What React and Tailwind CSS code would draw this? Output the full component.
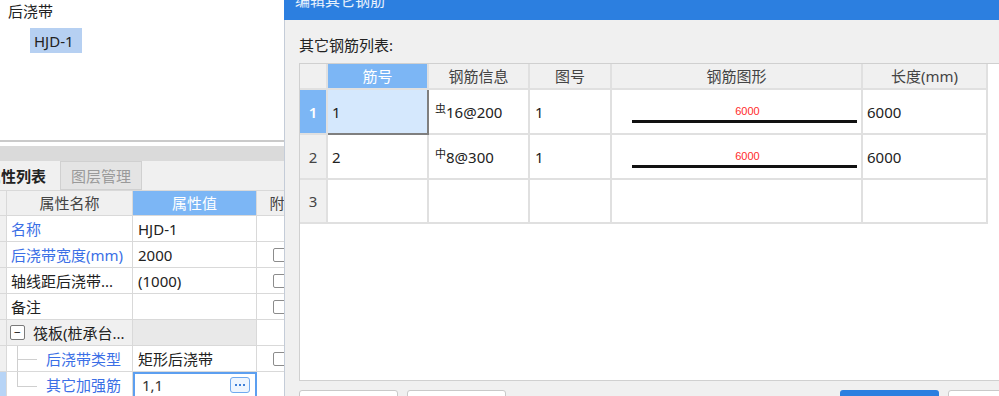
import React from "react";

const rows = [
  { name: "名称", value: "HJD-1", blue: true, check: false },
  { name: "后浇带宽度(mm)", value: "2000", blue: true, check: true },
  { name: "轴线距后浇带...", value: "(1000)", blue: false, check: true },
  { name: "备注", value: "", blue: false, check: true },
];

function Check() {
  return <span className="block w-[14px] h-[14px] rounded-[2px] border border-[#8c8c8c] bg-white" />;
}

function PropRow({ children, value, check, head = "bg-[#f0f0f0]" }) {
  return (
    <div className="flex h-[26px] shrink-0">
      <div className={`w-[7px] shrink-0 border-r border-b border-[#d9d9d9] ${head}`} />
      {children}
      <div className="w-[124px] shrink-0 border-r border-b border-[#d9d9d9] flex items-center pl-[5px] text-[#222]">{value}</div>
      <div className="w-[55px] shrink-0 border-b border-[#d9d9d9] flex items-center pl-[16px]">{check && <Check />}</div>
    </div>
  );
}

function LeftPanel() {
  return (
    <div className="w-[284px] shrink-0 h-full flex flex-col overflow-hidden">
      <div className="h-[140px] shrink-0 bg-white pl-[8px] pt-[1px]">
        <div className="leading-[20px] text-[#222]">后浇带</div>
        <div className="ml-[22px] mt-[7px] w-[52px] h-[25px] bg-[#b6d0f2] flex items-center pl-[4px] text-[#222]">HJD-1</div>
      </div>
      <div className="h-[2px] shrink-0 bg-[#cacaca]" />
      <div className="h-[4px] shrink-0 bg-white" />
      <div className="h-[15px] shrink-0 bg-[#dadada]" />
      <div className="h-[29px] shrink-0 bg-[#f0f0f0] flex">
        <div className="w-[60px] flex items-center font-semibold text-[#222] overflow-hidden">
          <span className="ml-[-14px] whitespace-nowrap">属性列表</span>
        </div>
        <div className="w-[82px] bg-[#e4e4e4] border border-[#d0d0d0] flex items-center justify-center text-[#9a9a9a]">图层管理</div>
      </div>
      <div className="w-[312px] shrink-0 text-[15px]">
        <div className="flex h-[26px] border-t border-[#d9d9d9]">
          <div className="w-[7px] shrink-0 bg-[#f0f0f0] border-r border-b border-[#d9d9d9]" />
          <div className="w-[126px] shrink-0 bg-[#f0f0f0] border-r border-b border-[#d9d9d9] flex items-center justify-center text-[#444]">属性名称</div>
          <div className="w-[124px] shrink-0 bg-[#7cb6f5] border-r border-b border-[#d9d9d9] flex items-center justify-center text-white">属性值</div>
          <div className="w-[55px] shrink-0 bg-[#f0f0f0] border-b border-[#d9d9d9] flex items-center justify-center text-[#444]">附加</div>
        </div>
        {rows.map((r) => (
          <PropRow key={r.name} value={r.value} check={r.check}>
            <div className={`w-[126px] shrink-0 bg-white border-r border-b border-[#d9d9d9] flex items-center pl-[4px] whitespace-nowrap ${r.blue ? "text-[#3b6fe6]" : "text-[#222]"}`}>{r.name}</div>
          </PropRow>
        ))}
        <div className="flex h-[26px]">
          <div className="w-[7px] shrink-0 bg-[#f0f0f0] border-r border-b border-[#d9d9d9]" />
          <div className="w-[126px] shrink-0 bg-[#f0f0f0] border-r border-b border-[#d9d9d9] flex items-center pl-[3px] text-[#222] whitespace-nowrap">
            <span className="w-[15px] h-[15px] rounded-[2px] border border-[#7a7a7a] bg-white flex items-center justify-center text-[12px] leading-none mr-[8px]">−</span>
            筏板(桩承台...
          </div>
          <div className="w-[124px] shrink-0 bg-[#e9e9e9] border-r border-b border-[#d9d9d9]" />
          <div className="w-[55px] shrink-0 bg-white border-b border-[#d9d9d9]" />
        </div>
        <PropRow value="矩形后浇带" check>
          <div className="w-[126px] shrink-0 bg-white border-r border-b border-[#d9d9d9] flex items-center whitespace-nowrap text-[#3b6fe6]">
            <div className="relative w-[39px] self-stretch shrink-0">
              <span className="absolute left-[10px] top-0 bottom-0 w-px bg-[#cfcfcf]" />
              <span className="absolute left-[10px] top-[13px] w-[20px] h-px bg-[#cfcfcf]" />
            </div>
            后浇带类型
          </div>
        </PropRow>
        <div className="flex h-[26px]">
          <div className="w-[7px] shrink-0 bg-[#b7d4f6] border-r border-b border-[#d9d9d9]" />
          <div className="w-[126px] shrink-0 bg-white border-r border-b border-[#d9d9d9] flex items-center whitespace-nowrap text-[#3b6fe6]">
            <div className="relative w-[39px] self-stretch shrink-0">
              <span className="absolute left-[10px] top-0 h-[14px] w-px bg-[#cfcfcf]" />
              <span className="absolute left-[10px] top-[14px] w-[20px] h-px bg-[#cfcfcf]" />
            </div>
            其它加强筋
          </div>
          <div className="w-[124px] shrink-0 bg-white border-2 border-[#5c9ff0] flex items-center pl-[7px] pr-[5px] text-[#333]">
            <span className="flex-1">1,1</span>
            <span className="w-[20px] h-[16px] rounded-[3px] border border-[#6fa9ef] bg-[#eef5fe] flex items-center justify-center gap-[2px]">
              <span className="w-[2px] h-[2px] bg-[#3d7fd8]" />
              <span className="w-[2px] h-[2px] bg-[#3d7fd8]" />
              <span className="w-[2px] h-[2px] bg-[#3d7fd8]" />
            </span>
          </div>
          <div className="w-[55px] shrink-0 bg-white border-b border-[#d9d9d9]" />
        </div>
      </div>
    </div>
  );
}

const cols = ["w-[28px]", "w-[101px]", "w-[101px]", "w-[82px]", "w-[251px]", "w-[125px]"];

function Shape() {
  return (
    <div className="h-full flex flex-col pl-[20px] pr-[4px] pt-[14px]">
      <div className="text-center text-[11px] leading-[14px] text-[#ff2a2a] font-['Liberation_Sans',sans-serif] pl-[6px]">6000</div>
      <div className="mt-[2px] h-[3px] bg-[#111]" />
    </div>
  );
}

function Cell({ w, className = "", children }) {
  return <div className={`${w} shrink-0 h-full border-r-2 border-b-2 border-[#e0e0e0] ${className}`}>{children}</div>;
}

function Dialog() {
  const data = [
    { n: "1", info: "16@200", sym: "虫", sel: true, h: "h-[45px]" },
    { n: "2", info: "8@300", sym: "中", sel: false, h: "h-[45px]" },
  ];
  return (
    <div className="flex-1 h-full flex flex-col overflow-hidden">
      <div className="h-[20px] shrink-0 bg-[#2c7fe0] pl-[11px] overflow-hidden">
        <div className="mt-[-10px] leading-[20px] text-white/90 whitespace-nowrap">编辑其它钢筋</div>
      </div>
      <div className="flex-1 bg-[#f0f0f0] border-l border-[#c4ccd8] pl-[14px] flex flex-col">
        <div className="shrink-0 pt-[15px] leading-[20px] text-[#222]">其它钢筋列表:</div>
        <div className="shrink-0 mt-[8px] h-[318px] w-[740px] bg-white border border-[#d0d0d0]">
          <div className="flex h-[26px] text-[#444]">
            <Cell w={cols[0]} className="bg-[#f0f0f0]" />
            <Cell w={cols[1]} className="bg-[#7cb6f5] text-white flex items-center justify-center">筋号</Cell>
            <Cell w={cols[2]} className="bg-[#f0f0f0] flex items-center justify-center">钢筋信息</Cell>
            <Cell w={cols[3]} className="bg-[#f0f0f0] flex items-center justify-center">图号</Cell>
            <Cell w={cols[4]} className="bg-[#f0f0f0] flex items-center justify-center">钢筋图形</Cell>
            <Cell w={cols[5]} className="bg-[#f0f0f0] flex items-center justify-center">长度(mm)</Cell>
          </div>
          {data.map((d) => (
            <div key={d.n} className={`flex ${d.h} text-[#222]`}>
              <Cell w={cols[0]} className={`flex items-center justify-center ${d.sel ? "bg-[#7cb6f5] text-white font-semibold" : "bg-[#f0f0f0] text-[#444]"}`}>{d.n}</Cell>
              <div className={`${cols[1]} shrink-0 h-full flex items-center pl-[4px] ${d.sel ? "bg-[#d5e8fd] border-r-2 border-b-2 border-[#7f7f7f]" : "border-r-2 border-b-2 border-[#e0e0e0]"}`}>{d.n}</div>
              <Cell w={cols[2]} className="flex items-center pl-[6px]">
                <span className="text-[11px] leading-none relative top-[-3px]">{d.sym}</span>
                <span>{d.info}</span>
              </Cell>
              <Cell w={cols[3]} className="flex items-center pl-[5px]">1</Cell>
              <Cell w={cols[4]}><Shape /></Cell>
              <Cell w={cols[5]} className="flex items-center pl-[4px]">6000</Cell>
            </div>
          ))}
          <div className="flex h-[44px] text-[#444]">
            <Cell w={cols[0]} className="bg-[#f0f0f0] flex items-center justify-center">3</Cell>
            <Cell w={cols[1]} />
            <Cell w={cols[2]} />
            <Cell w={cols[3]} />
            <Cell w={cols[4]} />
            <Cell w={cols[5]} />
          </div>
        </div>
        <div className="shrink-0 mt-[9px] flex">
          <div className="shrink-0 w-[99px] h-[26px] rounded-[3px] border border-[#c9c9c9] bg-white" />
          <div className="shrink-0 ml-[9px] w-[99px] h-[26px] rounded-[3px] border border-[#c9c9c9] bg-white" />
          <div className="shrink-0 ml-[334px] w-[99px] h-[26px] rounded-[3px] bg-[#2b7fe0]" />
          <div className="shrink-0 ml-[9px] w-[99px] h-[26px] rounded-[3px] border border-[#c9c9c9] bg-white" />
        </div>
      </div>
    </div>
  );
}

export default function App() {
  return (
    <div className="w-[999px] h-[396px] overflow-hidden flex bg-white text-[15px] leading-[20px] font-['Noto_Sans','Noto_Sans_CJK_SC',sans-serif]">
      <LeftPanel />
      <Dialog />
    </div>
  );
}
